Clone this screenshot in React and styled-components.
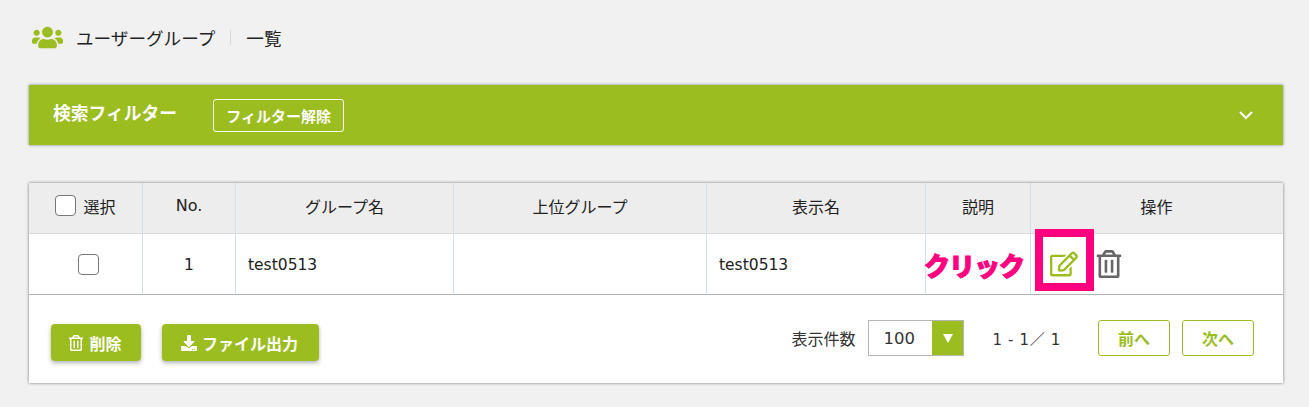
import React from 'react'
import styled, { createGlobalStyle } from 'styled-components'
import { FaUsers, FaRegEdit, FaRegTrashAlt, FaDownload } from 'react-icons/fa'

const GREEN = '#9bbd1f'
const PINK = '#ff007f'
const FONT = '"DejaVu Sans", "Noto Sans CJK JP", sans-serif'

const GlobalStyle = createGlobalStyle`
  html, body {
    margin: 0;
    padding: 0;
    background: #f1f1f1;
    font-family: ${FONT};
    color: #222;
  }
  * { box-sizing: border-box; }
`

const Page = styled.div`
  width: 1309px;
  height: 407px;
  padding: 0 26px 0 29px;
  overflow: hidden;
`

const TitleRow = styled.div`
  height: 85px;
  display: flex;
  align-items: center;
  padding: 0 0 11px 3px;
  font-size: 17.6px;
  color: #222;
  & > svg {
    color: ${GREEN};
    font-size: 31px;
    margin-right: 13px;
  }
`

const TitleDivider = styled.span`
  width: 1px;
  height: 15px;
  background: #d8d8d8;
  margin: 0 15px;
`

const FilterBar = styled.div`
  height: 60px;
  background: ${GREEN};
  box-shadow: 0 0 3px rgba(0, 0, 0, 0.45);
  display: flex;
  align-items: center;
  padding: 0 29px 0 24px;
  color: #fff;
`

const FilterTitle = styled.h2`
  margin: 0 36px 6px 0;
  font-size: 17.8px;
  font-weight: 700;
`

const ClearButton = styled.button`
  height: 33px;
  width: 131px;
  border: 1px solid #fff;
  border-radius: 3px;
  background: transparent;
  color: #fff;
  font-family: ${FONT};
  font-size: 15px;
  font-weight: 700;
  padding: 0;
  white-space: nowrap;
`

const Chevron = styled.svg`
  margin-left: auto;
  width: 16px;
  height: 10px;
`

const Panel = styled.div`
  margin-top: 38px;
  background: #fff;
  box-shadow: 0 0 3px rgba(0, 0, 0, 0.5);
  height: 200px;
`

const Row = styled.div`
  display: grid;
  grid-template-columns: 114px 93px 218px 253px 219px 105px 1fr;
  height: ${p => p.$height}px;
  background: ${p => (p.$head ? '#ededed' : '#fff')};
  border-bottom: 1px solid ${p => (p.$head ? '#dcdcdc' : '#b5b5b5')};
`

const Cell = styled.div`
  position: relative;
  display: flex;
  align-items: center;
  justify-content: ${p => (p.$left ? 'flex-start' : 'center')};
  padding-left: ${p => (p.$left ? '12px' : '0')};
  border-right: 1px solid ${p => (p.$last ? 'transparent' : '#cfe0ea')};
  font-size: 15.5px;
  color: #222;
`

const TextCell = styled(Cell)`
  padding-top: 2px;
`

const HeadCell = styled(Cell)`
  gap: 7px;
  padding-bottom: 5px;
  font-size: 16px;
`

const Check = styled.span`
  display: inline-block;
  width: 21px;
  height: 21px;
  margin-left: ${p => (p.$offset ? '6px' : '0')};
  background: #fff;
  border: 1px solid #777;
  border-radius: 4px;
`

const RowActions = styled.div`
  display: flex;
  align-items: center;
  padding-left: 19px;
  width: 100%;
  color: #666;
  font-size: 28px;
  & > svg {
    display: block;
  }
`

const EditIcon = styled(FaRegEdit)`
  color: ${GREEN};
  margin-right: 17px;
`

const Highlight = styled.span`
  position: absolute;
  left: 4px;
  top: -5px;
  width: 59px;
  height: 62px;
  border: 8px solid ${PINK};
`

const ClickLabel = styled.span`
  position: absolute;
  left: -107px;
  top: 14px;
  color: ${PINK};
  font-size: 26px;
  line-height: 38px;
  letter-spacing: -1px;
  font-weight: 900;
  -webkit-text-stroke: 1px ${PINK};
  white-space: nowrap;
`

const Footer = styled.div`
  display: flex;
  align-items: center;
  height: 88px;
  padding: 0 29px 0 22px;
`

const SolidButton = styled.button`
  height: 37px;
  width: ${p => p.$width}px;
  margin-right: 21px;
  margin-top: 7px;
  display: flex;
  align-items: center;
  justify-content: center;
  gap: 5px;
  padding: 0 2px 0 0;
  border: 0;
  border-radius: 4px;
  background: ${GREEN};
  box-shadow: 0 2px 4px rgba(0, 0, 0, 0.3);
  color: #fff;
  font-family: ${FONT};
  font-size: 16px;
  font-weight: 700;
`

const Pager = styled.div`
  margin-left: auto;
  padding-bottom: 2px;
  display: flex;
  align-items: center;
  font-size: 16px;
  color: #333;
`

const PerPage = styled.div`
  display: flex;
  width: 96px;
  height: 36px;
  margin: 0 28px 0 13px;
  border: 1px solid #b5b5b5;
  font-size: 16.5px;
  color: #333;
`

const PerPageValue = styled.span`
  flex: 1;
  display: flex;
  align-items: center;
  padding-left: 14px;
`

const PerPageArrow = styled.span`
  width: 31px;
  background: ${GREEN};
  display: flex;
  align-items: center;
  justify-content: center;
  &::after {
    content: '';
    border-left: 5px solid transparent;
    border-right: 5px solid transparent;
    border-top: 9px solid #fff;
  }
`

const Range = styled.span`
  font-size: 15px;
  letter-spacing: 0.65px;
  margin-right: 37px;
  white-space: pre;
`

const OutlineButton = styled.button`
  width: 72px;
  height: 36px;
  margin-left: ${p => (p.$gap ? '12px' : '0')};
  padding: 0;
  background: #fff;
  border: 1px solid ${GREEN};
  border-radius: 3px;
  color: ${GREEN};
  font-family: ${FONT};
  font-size: 16px;
  font-weight: 700;
`

export default function App() {
  return (
    <Page>
      <GlobalStyle />
      <TitleRow>
        <FaUsers />
        <span>ユーザーグループ</span>
        <TitleDivider />
        <span>一覧</span>
      </TitleRow>

      <FilterBar>
        <FilterTitle>検索フィルター</FilterTitle>
        <ClearButton>フィルター解除</ClearButton>
        <Chevron viewBox="0 0 16 10">
          <path d="M2 2l6 6 6-6" fill="none" stroke="#fff" strokeWidth="2" />
        </Chevron>
      </FilterBar>

      <Panel>
        <Row $head $height={51}>
          <HeadCell><Check />選択</HeadCell>
          <HeadCell>No.</HeadCell>
          <HeadCell>グループ名</HeadCell>
          <HeadCell>上位グループ</HeadCell>
          <HeadCell>表示名</HeadCell>
          <HeadCell>説明</HeadCell>
          <HeadCell $last>操作</HeadCell>
        </Row>
        <Row $height={61}>
          <Cell><Check $offset /></Cell>
          <TextCell>1</TextCell>
          <TextCell $left>test0513</TextCell>
          <Cell />
          <TextCell $left>test0513</TextCell>
          <Cell />
          <Cell $last>
            <Highlight />
            <ClickLabel>クリック</ClickLabel>
            <RowActions>
              <EditIcon />
              <FaRegTrashAlt />
            </RowActions>
          </Cell>
        </Row>
        <Footer>
          <SolidButton $width={90}>
            <FaRegTrashAlt />削除
          </SolidButton>
          <SolidButton $width={157}>
            <FaDownload />ファイル出力
          </SolidButton>
          <Pager>
            表示件数
            <PerPage>
              <PerPageValue>100</PerPageValue>
              <PerPageArrow />
            </PerPage>
            <Range>1 - 1／ 1</Range>
            <OutlineButton>前へ</OutlineButton>
            <OutlineButton $gap>次へ</OutlineButton>
          </Pager>
        </Footer>
      </Panel>
    </Page>
  )
}
